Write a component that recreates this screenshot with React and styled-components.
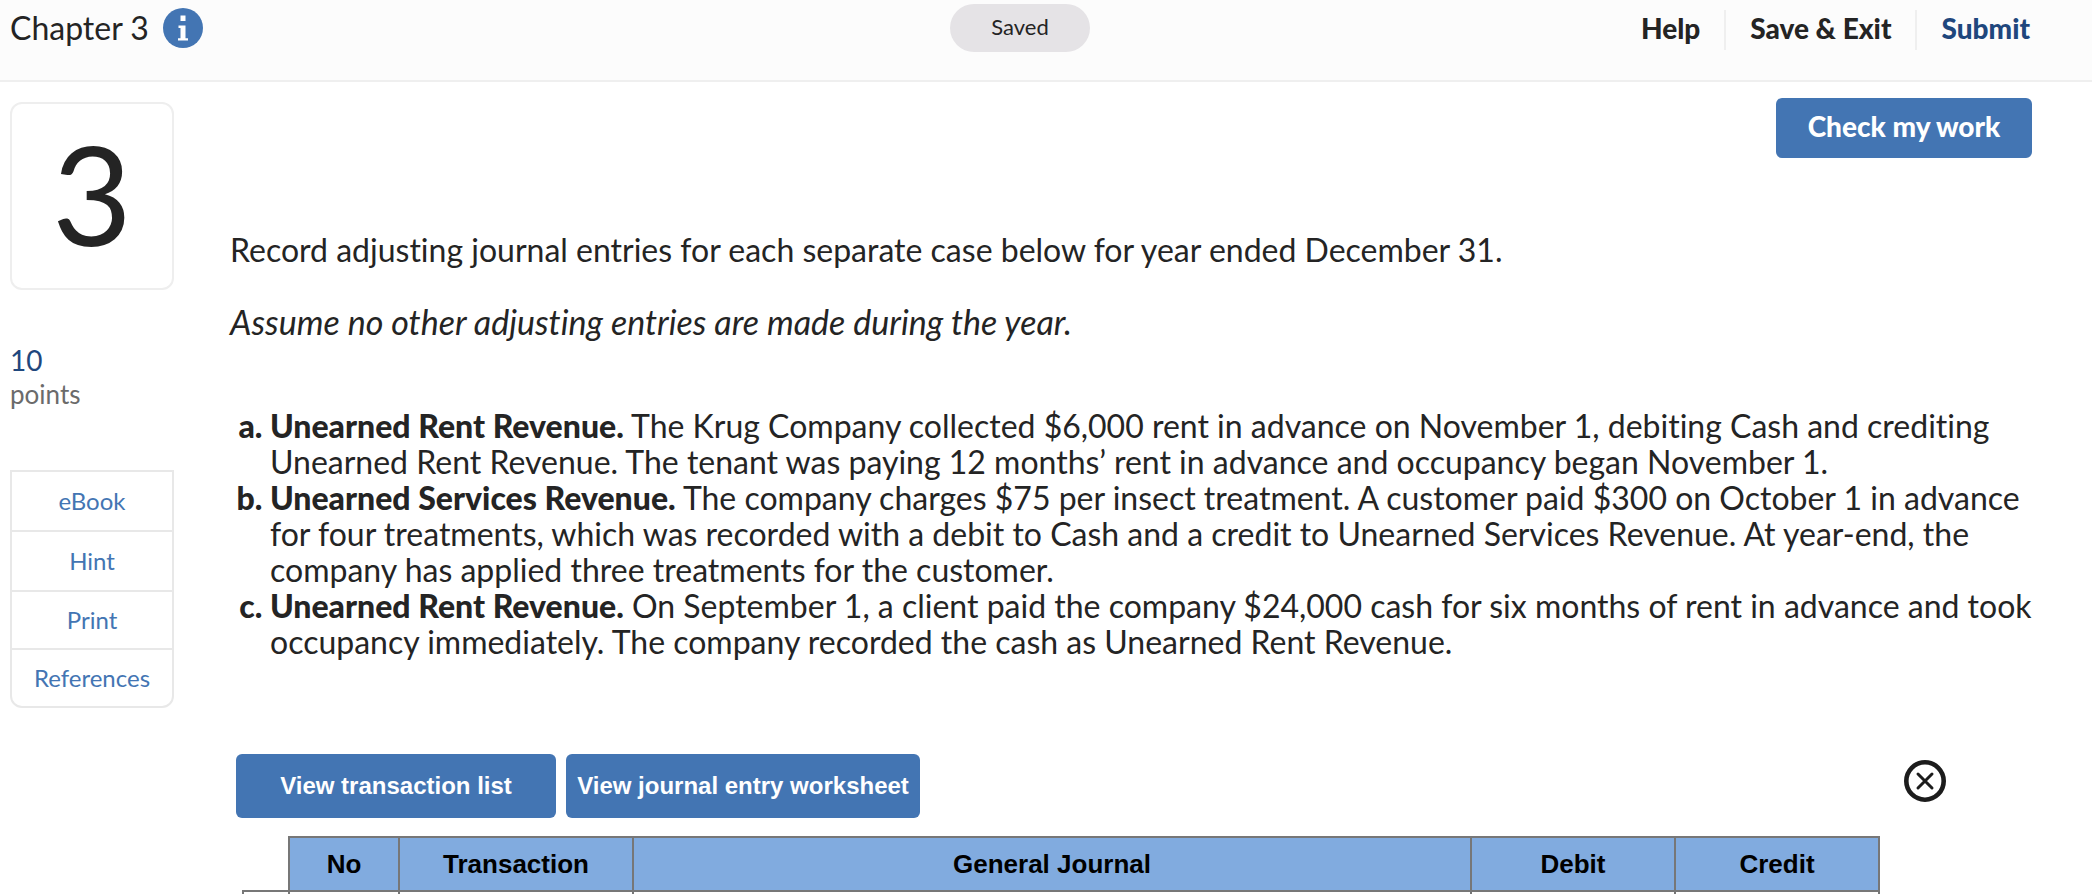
import React from 'react';
import styled, { createGlobalStyle } from 'styled-components';

const GlobalStyle = createGlobalStyle`
  *, *::before, *::after {
    box-sizing: border-box;
  }

  body {
    margin: 0;
    background: #fff;
    color: #242424;
    font-family: Lato, sans-serif;
    font-size: 32px;
    font-variant-ligatures: none;
    line-height: 36px;
  }
`;

const Page = styled.div`
  height: 100vh;
  overflow: hidden;
`;

const Header = styled.header`
  display: grid;
  grid-template-columns: 1fr auto 1fr;
  align-items: start;
  height: 82px;
  padding: 4px 62px 0 10px;
  background: #fcfcfc;
  border-bottom: 2px solid #efefef;
`;

const Chapter = styled.div`
  display: flex;
  align-items: center;
  gap: 14px;
  height: 48px;
`;

const InfoButton = styled.button`
  display: block;
  width: 40px;
  height: 40px;
  padding: 0;
  border: none;
  background: none;
  cursor: pointer;
`;

const SavedPill = styled.div`
  width: 140px;
  height: 48px;
  border-radius: 24px;
  background: #e5e3e6;
  font-size: 22px;
  line-height: 46px;
  text-align: center;
`;

const Nav = styled.nav`
  display: flex;
  justify-content: flex-end;
  padding-top: 6px;
`;

const NavLink = styled.a`
  height: 40px;
  padding: 0 24px;
  color: ${(props) => (props.$primary ? '#1f477d' : '#242424')};
  font-size: 28px;
  font-weight: 900;
  line-height: 36px;
  text-decoration: none;

  & + & {
    border-left: 2px solid #efefef;
  }

  &:last-child {
    padding-right: 0;
  }
`;

const Body = styled.div`
  display: flex;
  align-items: flex-start;
  gap: 56px;
  padding: 16px 46px 0 10px;
`;

const Sidebar = styled.aside`
  flex: none;
  width: 164px;
  padding-top: 4px;
`;

const QuestionNumber = styled.div`
  height: 188px;
  border: 2px solid #eee;
  border-radius: 12px;
  font-size: 138px;
  line-height: 178px;
  text-align: center;
`;

const Points = styled.div`
  margin-top: 52px;
  color: #6b6b6b;
  font-size: 26px;
  line-height: 32px;
`;

const PointsValue = styled.div`
  color: #1f477d;
  font-size: 28px;
  line-height: 36px;
`;

const ToolList = styled.ul`
  margin: 60px 0 0;
  padding: 0;
  list-style: none;
  border: 2px solid #e8e8e8;
  border-radius: 0 0 12px 12px;
`;

const ToolItem = styled.li`
  & + & {
    border-top: 2px solid #e8e8e8;
  }
`;

const ToolLink = styled.a`
  display: block;
  color: #4375b3;
  font-size: 24px;
  line-height: ${(props) => (props.$compact ? '56px' : '58px')};
  text-align: center;
  text-decoration: none;
`;

const Content = styled.main`
  flex: 1;
  min-width: 0;
`;

const CheckRow = styled.div`
  display: flex;
  justify-content: flex-end;
  padding-right: 14px;
`;

const BlueButton = styled.button`
  min-width: ${(props) => props.$width};
  height: 64px;
  padding: 0 10px;
  border: none;
  border-radius: 6px;
  background: #4375b3;
  color: #fff;
  font-family: 'Liberation Sans', Arial, sans-serif;
  font-size: 24px;
  font-weight: 700;
  cursor: pointer;
`;

const CheckButton = styled(BlueButton)`
  height: 60px;
  padding-bottom: 4px;
  font-family: Lato, sans-serif;
  font-size: 28px;
  font-weight: 900;
`;

const Prompt = styled.div`
  padding-top: 74px;

  p {
    margin: 0 0 36px;
  }
`;

const Assumption = styled.p`
  font-size: 34px;
  font-style: italic;
`;

const CaseList = styled.ol`
  margin: 68px 0 0;
  padding-left: 40px;
  list-style: lower-alpha;
`;

const CaseItem = styled.li`
  &::marker {
    font-weight: 900;
  }

  b {
    font-weight: 900;
  }
`;

const Worksheet = styled.section`
  margin-top: 94px;
  padding-left: 6px;
  font-family: 'Liberation Sans', Arial, sans-serif;
`;

const Toolbar = styled.div`
  display: flex;
  align-items: center;
  gap: 10px;
  padding-right: 100px;
`;

const CloseButton = styled.button`
  display: block;
  width: 42px;
  height: 42px;
  margin: 0 0 10px auto;
  padding: 0;
  border: none;
  background: none;
  cursor: pointer;
`;

const JournalTable = styled.table`
  width: calc(100% - 172px);
  margin: 18px 0 0 6px;
  border-collapse: collapse;
  table-layout: fixed;
`;

const HeadCell = styled.th`
  height: 54px;
  padding: 0;
  border: 2px solid #777;
  background: #81abdf;
  color: #000;
  font-size: 26px;
  font-weight: 700;
  line-height: 28px;
  width: ${(props) => props.$width};
`;

const CornerCell = styled.td`
  width: 46px;
`;

const Cell = styled.td`
  height: 50px;
  border: 2px solid #777;
`;

const tools = ['eBook', 'Hint', 'Print', 'References'];

const cases = [
  {
    title: 'Unearned Rent Revenue.',
    text: 'The Krug Company collected $6,000 rent in advance on November 1, debiting Cash and crediting Unearned Rent Revenue. The tenant was paying 12 months’ rent in advance and occupancy began November 1.',
  },
  {
    title: 'Unearned Services Revenue.',
    text: 'The company charges $75 per insect treatment. A customer paid $300 on October 1 in advance for four treatments, which was recorded with a debit to Cash and a credit to Unearned Services Revenue. At year-end, the company has applied three treatments for the customer.',
  },
  {
    title: 'Unearned Rent Revenue.',
    text: 'On September 1, a client paid the company $24,000 cash for six months of rent in advance and took occupancy immediately. The company recorded the cash as Unearned Rent Revenue.',
  },
];

const columns = [
  { label: 'No', width: '110px' },
  { label: 'Transaction', width: '234px' },
  { label: 'General Journal' },
  { label: 'Debit', width: '204px' },
  { label: 'Credit', width: '204px' },
];

function InfoIcon() {
  return (
    <svg width="40" height="40" viewBox="0 0 40 40" aria-hidden="true">
      <circle cx="20" cy="20" r="20" fill="#4375b3" />
      <path
        fill="#fff"
        d="M17.5 7.5h5v5.5h-5zM15.5 17.5h7v12.7H25v2.3H15v-2.3h2.5V20h-2z"
      />
    </svg>
  );
}

function CloseIcon() {
  return (
    <svg width="42" height="42" viewBox="0 0 42 42" fill="none" stroke="#1c1c1c" aria-hidden="true">
      <circle cx="21" cy="21" r="18.7" strokeWidth="4.6" />
      <path d="M14 14l14 14M28 14L14 28" strokeWidth="3" strokeLinecap="round" />
    </svg>
  );
}

export default function App() {
  return (
    <>
      <GlobalStyle />
      <Page>
        <Header>
          <Chapter>
            Chapter 3
            <InfoButton aria-label="Information">
              <InfoIcon />
            </InfoButton>
          </Chapter>
          <SavedPill>Saved</SavedPill>
          <Nav>
            <NavLink href="#help">Help</NavLink>
            <NavLink href="#exit">Save &amp; Exit</NavLink>
            <NavLink href="#submit" $primary>Submit</NavLink>
          </Nav>
        </Header>

        <Body>
          <Sidebar>
            <QuestionNumber>3</QuestionNumber>
            <Points>
              <PointsValue>10</PointsValue>
              points
            </Points>
            <ToolList>
              {tools.map((tool, i) => (
                <ToolItem key={tool}>
                  <ToolLink href={`#${tool}`} $compact={i > 1}>{tool}</ToolLink>
                </ToolItem>
              ))}
            </ToolList>
          </Sidebar>

          <Content>
            <CheckRow>
              <CheckButton $width="256px">Check my work</CheckButton>
            </CheckRow>

            <Prompt>
              <p>Record adjusting journal entries for each separate case below for year ended December 31.</p>
              <Assumption>Assume no other adjusting entries are made during the year.</Assumption>
            </Prompt>

            <CaseList>
              {cases.map((item, i) => (
                <CaseItem key={i}>
                  <b>{item.title}</b> {item.text}
                </CaseItem>
              ))}
            </CaseList>

            <Worksheet>
              <Toolbar>
                <BlueButton $width="320px">View transaction list</BlueButton>
                <BlueButton $width="354px">View journal entry worksheet</BlueButton>
                <CloseButton aria-label="Close">
                  <CloseIcon />
                </CloseButton>
              </Toolbar>

              <JournalTable>
                <thead>
                  <tr>
                    <CornerCell />
                    {columns.map((col) => (
                      <HeadCell key={col.label} scope="col" $width={col.width}>{col.label}</HeadCell>
                    ))}
                  </tr>
                </thead>
                <tbody>
                  <tr>
                    <Cell />
                    {columns.map((col) => (
                      <Cell key={col.label} />
                    ))}
                  </tr>
                </tbody>
              </JournalTable>
            </Worksheet>
          </Content>
        </Body>
      </Page>
    </>
  );
}
